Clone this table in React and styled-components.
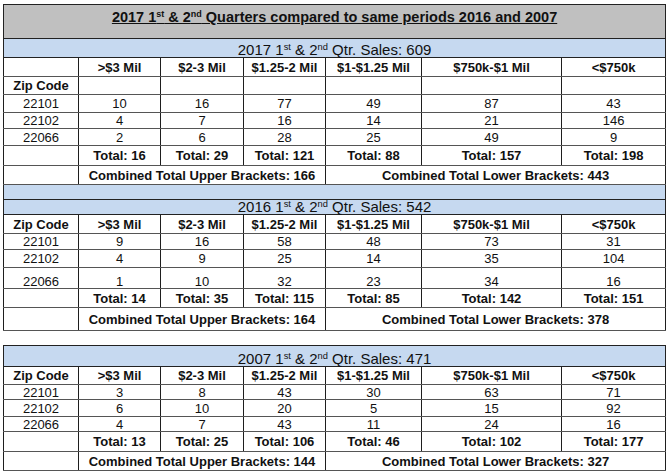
import React from 'react'
import styled, { createGlobalStyle } from 'styled-components'

const GlobalStyle = createGlobalStyle`
  body {
    margin: 0;
    background: #ffffff;
    font-family: "Liberation Sans", Arial, sans-serif;
    color: #111;
  }
`

const Page = styled.div`
  padding: 4px 0 0 3px;
  display: flex;
  flex-direction: column;
  gap: 14px;
  width: 662px;
`

const Sheet = styled.table`
  width: 662px;
  table-layout: fixed;
  border-collapse: collapse;
  border: 1px solid #222;
`

const Row = styled.tr`
  height: ${props => props.h}px;
  vertical-align: ${props => props.va || 'middle'};
`

const TitleCell = styled.td`
  background: #c0c0c0;
  border: 1px solid #222;
  text-align: center;
  vertical-align: top;
  padding: 4px 0 0;
  font-size: 14.5px;
  line-height: 16px;
  font-weight: bold;
  text-decoration: underline;
`

const BandCell = styled.td`
  background: #c6d9f0;
  border: 1px solid #222;
  text-align: center;
  vertical-align: bottom;
  padding: 0;
  font-size: 15px;
  line-height: 14px;
`

const Cell = styled.td`
  border: 1px solid #1e1e1e;
  border-top-color: #555;
  border-bottom-color: #555;
  text-align: center;
  padding: 0;
  font-size: 13px;
  line-height: 13px;
  font-weight: ${props => (props.bold ? 'bold' : 'normal')};
  white-space: nowrap;
`

const Sup = styled.sup`
  font-size: 0.62em;
  vertical-align: 0.55em;
  line-height: 0;
`

const cols = [75, 82, 83, 82, 96, 140, 104]
const brackets = ['>$3 Mil', '$2-3 Mil', '$1.25-2 Mil', '$1-$1.25 Mil', '$750k-$1 Mil', '<$750k']

const Cols = () => (
  <colgroup>
    {cols.map((w, i) => <col key={i} style={{ width: w }} />)}
  </colgroup>
)

const Quarters = ({ year }) => (
  <>
    {year} 1<Sup>st</Sup> &amp; 2<Sup>nd</Sup>
  </>
)

const Section = ({ data }) => {
  const { year, sales, split, heights, rows, totals, upper, lower, lastBottom } = data
  return (
    <>
      <Row h={heights.band}>
        <BandCell colSpan={7}><Quarters year={year} /> Qtr. Sales: {sales}</BandCell>
      </Row>
      <Row h={heights.head}>
        <Cell bold>{split ? '' : 'Zip Code'}</Cell>
        {brackets.map(b => <Cell bold key={b}>{b}</Cell>)}
      </Row>
      {split && (
        <Row h={heights.zip}>
          <Cell bold>Zip Code</Cell>
          {brackets.map(b => <Cell key={b} />)}
        </Row>
      )}
      {rows.map((r, i) => (
        <Row h={heights.rows[i]} key={r[0]} va={lastBottom && i === rows.length - 1 ? 'bottom' : 'middle'}>
          {r.map((v, j) => <Cell key={j}>{v}</Cell>)}
        </Row>
      ))}
      <Row h={heights.total}>
        <Cell />
        {totals.map((t, i) => <Cell bold key={i}>Total: {t}</Cell>)}
      </Row>
      <Row h={heights.combined}>
        <Cell />
        <Cell bold colSpan={3}>Combined Total Upper Brackets: {upper}</Cell>
        <Cell bold colSpan={3}>Combined Total Lower Brackets: {lower}</Cell>
      </Row>
    </>
  )
}

const y2017 = {
  year: 2017,
  sales: 609,
  split: true,
  heights: { band: 19, head: 19, zip: 18, rows: [18, 16, 17], total: 20, combined: 19 },
  rows: [
    ['22101', 10, 16, 77, 49, 87, 43],
    ['22102', 4, 7, 16, 14, 21, 146],
    ['22066', 2, 6, 28, 25, 49, 9],
  ],
  totals: [16, 29, 121, 88, 157, 198],
  upper: 166,
  lower: 443,
}

const y2016 = {
  year: 2016,
  sales: 542,
  lastBottom: true,
  heights: { band: 15, head: 19, rows: [16, 18, 21], total: 19, combined: 23 },
  rows: [
    ['22101', 9, 16, 58, 48, 73, 31],
    ['22102', 4, 9, 25, 14, 35, 104],
    ['22066', 1, 10, 32, 23, 34, 16],
  ],
  totals: [14, 35, 115, 85, 142, 151],
  upper: 164,
  lower: 378,
}

const y2007 = {
  year: 2007,
  sales: 471,
  heights: { band: 21, head: 18, rows: [15, 17, 15], total: 20, combined: 19 },
  rows: [
    ['22101', 3, 8, 43, 30, 63, 71],
    ['22102', 6, 10, 20, 5, 15, 92],
    ['22066', 4, 7, 43, 11, 24, 16],
  ],
  totals: [13, 25, 106, 46, 102, 177],
  upper: 144,
  lower: 327,
}

export default function App() {
  return (
    <>
      <GlobalStyle />
      <Page>
        <Sheet>
          <Cols />
          <tbody>
            <Row h={34}>
              <TitleCell colSpan={7}>
                2017 1<Sup>st</Sup> &amp; 2<Sup>nd</Sup> Quarters compared to same periods 2016 and 2007
              </TitleCell>
            </Row>
            <Section data={y2017} />
            <Row h={15}>
              <BandCell colSpan={7} />
            </Row>
            <Section data={y2016} />
          </tbody>
        </Sheet>
        <Sheet>
          <Cols />
          <tbody>
            <Section data={y2007} />
          </tbody>
        </Sheet>
      </Page>
    </>
  )
}
